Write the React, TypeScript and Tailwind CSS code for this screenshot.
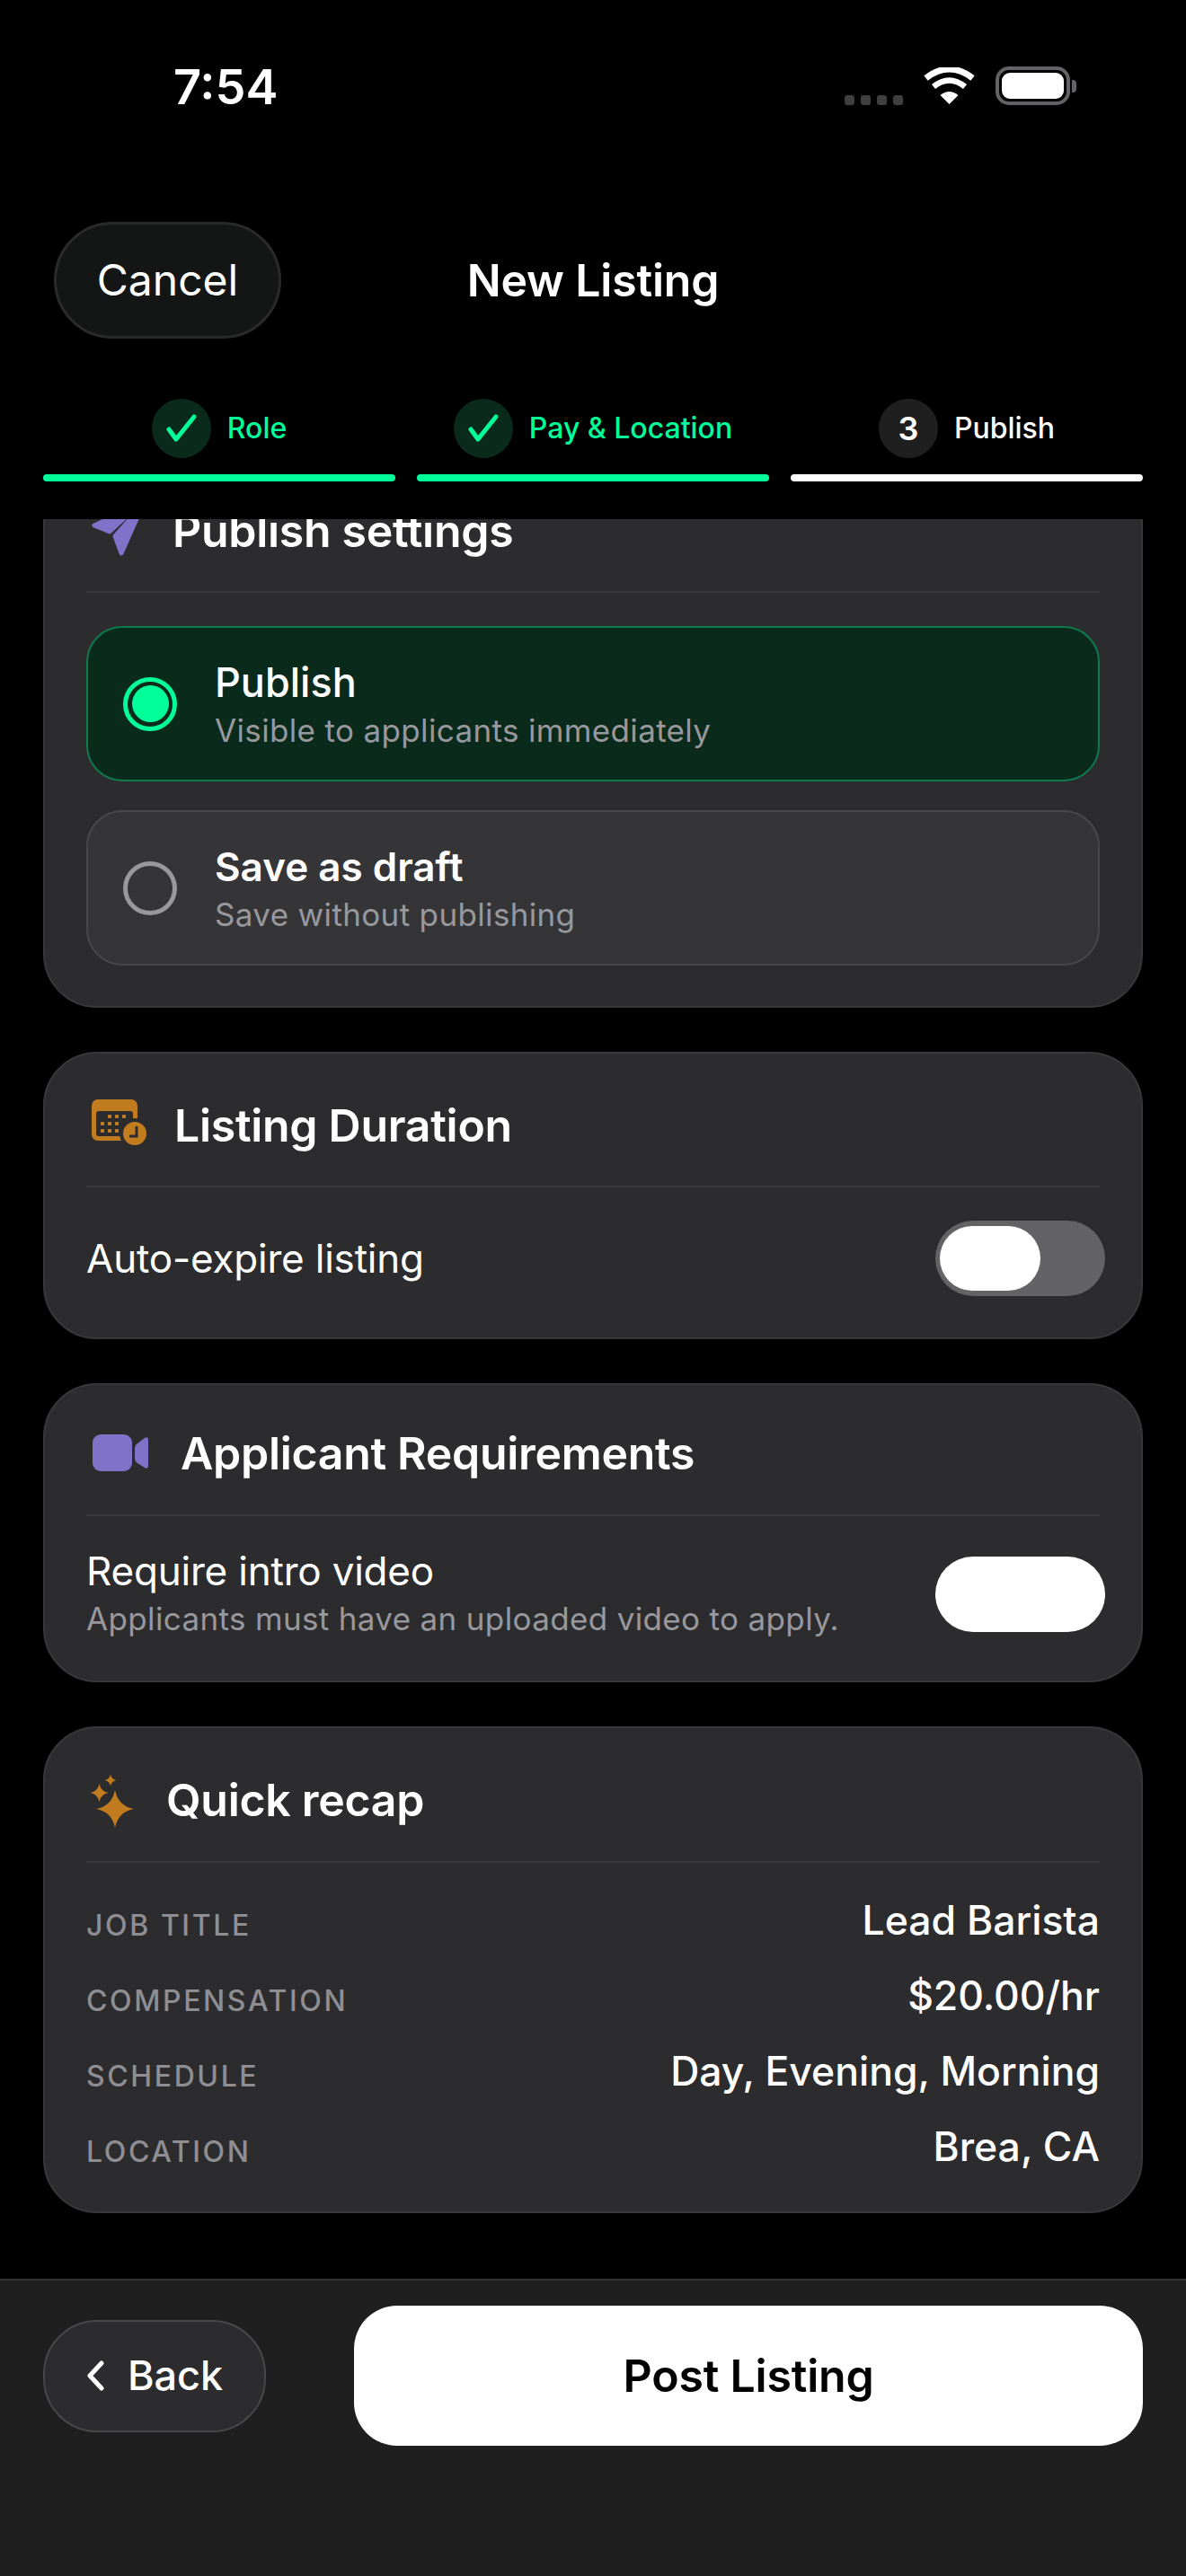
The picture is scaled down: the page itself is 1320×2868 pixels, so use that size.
import React from "react";

function Check() {
  return (
    <svg width="36" height="32" viewBox="0 0 36 32" fill="none">
      <path d="M4 17 L12 28 L32 3" stroke="#00ff99" strokeWidth="5" strokeLinecap="round" strokeLinejoin="round" />
    </svg>
  );
}

function Step({ label, mark, active, gap }: { label: string; mark: React.ReactNode; active: boolean; gap: string }) {
  return (
    <div className="flex-1 flex flex-col">
      <div className={`flex items-center justify-center h-[66px] ${gap}`}>
        <div className={`w-[66px] h-[66px] rounded-full flex items-center justify-center ${active ? "bg-[#0a2a1c]" : "bg-[#1f1f1f]"}`}>{mark}</div>
        <span className={`text-[32px] font-medium ${active ? "text-[#00ff99]" : "text-white"}`}>{label}</span>
      </div>
      <div className={`mt-[18px] h-[8px] rounded-[4px] ${active ? "bg-[#00ff99]" : "bg-white"}`} />
    </div>
  );
}

function Toggle({ on }: { on: boolean }) {
  return on ? (
    <div className="w-[189px] h-[84px] rounded-full bg-white -mr-[6px] shrink-0" />
  ) : (
    <div className="w-[189px] h-[84px] rounded-full bg-[#636366] -mr-[6px] shrink-0 flex items-center pl-[5px]">
      <div className="w-[112px] h-[72px] rounded-full bg-white" />
    </div>
  );
}

function Card({ children }: { children: React.ReactNode }) {
  return <section className="rounded-[60px] bg-[#2c2c2e] border-2 border-[#38383a] px-[46px]">{children}</section>;
}

function CardHead({ icon, title, h }: { icon: React.ReactNode; title: string; h: string }) {
  return (
    <div className={`flex items-center border-b-2 border-[#38383a] ${h}`}>
      {icon}
      <h2 className="text-[50px] font-semibold text-white tracking-[-0.3px]">{title}</h2>
    </div>
  );
}

function Option({ title, sub, selected }: { title: string; sub: string; selected: boolean }) {
  return (
    <div className={`h-[173px] rounded-[40px] border-2 flex items-center pl-[39px] gap-[42px] ${selected ? "bg-[#0a2a1c] border-[#0f7a4e]" : "bg-[#353537] border-[#48484a]"}`}>
      <div className={`w-[60px] h-[60px] rounded-full border-[5px] flex items-center justify-center shrink-0 ${selected ? "border-[#00ff99]" : "border-[#98989d]"}`}>
        {selected && <div className="w-[41px] h-[41px] rounded-full bg-[#00ff99]" />}
      </div>
      <div className="flex flex-col pt-[4px]">
        <span className={`leading-[54px] text-white ${selected ? "text-[45px] font-medium" : "text-[44px] font-semibold"}`}>{title}</span>
        <span className="text-[35px] leading-[52px] tracking-[0.35px] text-[#98989d]">{sub}</span>
      </div>
    </div>
  );
}

function Recap({ label, value }: { label: string; value: string }) {
  return (
    <div className="flex items-center justify-between h-[84px]">
      <span className="text-[32px] font-medium tracking-[2.6px] text-[#8e8e93]">{label}</span>
      <span className="text-[44.5px] font-medium text-white pb-[12px]">{value}</span>
    </div>
  );
}

const PlaneIcon = (
  <svg width="64" height="64" viewBox="0 0 64 64" className="shrink-0 ml-[2px] mr-[30px] -mt-[6px]" fill="#7f72c8" stroke="#7f72c8" strokeWidth="5" strokeLinejoin="round">
    <path d="M7 28 L24 35 L56 5 Z" />
    <path d="M61 5 L30 40 L37 59 Z" />
  </svg>
);

const CalendarIcon = (
  <svg width="64" height="56" viewBox="0 0 64 56" className="shrink-0 ml-[6px] mr-[28px] -mt-[4px]">
    <rect x="0" y="0" width="51" height="46" rx="7" fill="#c27c20" />
    <rect x="5" y="13" width="41" height="28" rx="3" fill="#2c2c2e" />
    {[[18,0],[26,0],[34,0],[10,1],[18,1],[26,1],[10,2],[18,2],[26,2]].map(([x, r], i) => (
      <rect key={i} x={x} y={17 + r * 8} width="4" height="4" rx="1" fill="#c27c20" />
    ))}
    <circle cx="48" cy="38" r="17" fill="#2c2c2e" />
    <circle cx="48" cy="38" r="13" fill="#c27c20" />
    <path d="M50 30 V41 H42" fill="none" stroke="#2c2c2e" strokeWidth="3" />
  </svg>
);

const VideoIcon = (
  <svg width="62" height="42" viewBox="0 0 62 42" className="shrink-0 ml-[7px] mr-[36px]" fill="#7f72c8">
    <rect x="0" y="0" width="44" height="41" rx="9" />
    <path d="M47 15 Q47 12 50 10 L58 4 Q62 2 62 6 V35 Q62 39 58 37 L50 32 Q47 30 47 27 Z" />
  </svg>
);

function star(cx: number, cy: number, r: number, k = 0.16) {
  const q = r * k;
  return `M${cx} ${cy - r} Q${cx + q} ${cy - q} ${cx + r} ${cy} Q${cx + q} ${cy + q} ${cx} ${cy + r} Q${cx - q} ${cy + q} ${cx - r} ${cy} Q${cx - q} ${cy - q} ${cx} ${cy - r} Z`;
}

const SparkIcon = (
  <svg width="50" height="62" viewBox="0 0 50 62" className="shrink-0 ml-[4px] mr-[35px]" fill="#c27c20">
    <path d={star(28, 40, 21)} />
    <path d={star(10.5, 22, 10)} />
    <path d={star(23, 8, 6.5)} />
  </svg>
);

export default function App() {
  return (
    <div className="w-[1320px] h-[2868px] bg-black flex flex-col overflow-hidden" style={{ fontFamily: "Inter, sans-serif" }}>
      {/* status bar */}
      <div className="h-[247px] shrink-0 flex items-start justify-between pl-[193px] pr-[122px] pt-[66px]">
        <span className="text-[54px] leading-[62px] font-semibold text-white">7:54</span>
        <div className="flex items-start mt-[9px]">
          <div className="flex gap-[7px] mt-[31px] mr-[23px]">
            {[0, 1, 2, 3].map((i) => (
              <div key={i} className="w-[11px] h-[11px] rounded-[3px] bg-[#3f3f3f]" />
            ))}
          </div>
          <svg width="57" height="41" viewBox="0 0 57 41" className="mr-[23px]" fill="none" stroke="#fff">
            <path d="M18.5 31 Q28.5 23 38.5 31 L28.5 41 Z" fill="#fff" stroke="none" />
            <path d="M11 21.5 Q28.5 7.5 46 21.5" strokeWidth="6.5" />
            <path d="M2.5 12 Q28.5 -8 54.5 12" strokeWidth="7" />
          </svg>
          <div className="flex items-center -mt-[1px]">
            <div className="w-[83px] h-[43px] rounded-[15px] border-[4px] border-[#636366] p-[3px]">
              <div className="w-full h-full rounded-[9px] bg-white" />
            </div>
            <div className="w-[5px] h-[14px] rounded-r-[4px] bg-[#636366] ml-[2px]" />
          </div>
        </div>
      </div>

      {/* nav */}
      <div className="relative h-[130px] shrink-0 flex items-center justify-center">
        <button className="absolute left-[60px] top-0 w-[253px] h-[130px] rounded-[65px] bg-[#141616] border-[3px] border-[#2a2a2c] text-[48px] text-white">Cancel</button>
        <h1 className="text-[50px] font-semibold text-white tracking-[-0.2px]">New Listing</h1>
      </div>

      {/* stepper */}
      <div className="shrink-0 flex gap-[24px] px-[48px] mt-[67px]">
        <Step label="Role" active gap="gap-[18px]" mark={<Check />} />
        <Step label="Pay & Location" active gap="gap-[18px]" mark={<Check />} />
        <Step label="Publish" active={false} gap="gap-[18px]" mark={<span className="text-[36px] font-semibold text-white">3</span>} />
      </div>

      {/* scroll area */}
      <div className="flex-1 mt-[42px] overflow-hidden">
        <div className="-mt-[69px] px-[48px] flex flex-col gap-[49px]">
          <Card>
            <CardHead icon={PlaneIcon} title="Publish settings" h="h-[149px] pt-[14px]" />
            <div className="pt-[37px] pb-[45px] flex flex-col gap-[32px]">
              <Option title="Publish" sub="Visible to applicants immediately" selected />
              <Option title="Save as draft" sub="Save without publishing" selected={false} />
            </div>
          </Card>

          <Card>
            <CardHead icon={CalendarIcon} title="Listing Duration" h="h-[149px] pt-[14px]" />
            <div className="h-[167px] flex items-center justify-between pb-[10px]">
              <span className="text-[44px] tracking-[-0.2px] text-white">Auto-expire listing</span>
              <Toggle on={false} />
            </div>
          </Card>

          <Card>
            <CardHead icon={VideoIcon} title="Applicant Requirements" h="h-[146px] pt-[8px]" />
            <div className="h-[183px] flex items-center justify-between pb-[10px]">
              <div className="flex flex-col">
                <span className="text-[44px] leading-[54px] tracking-[-0.2px] text-white">Require intro video</span>
                <span className="text-[35px] leading-[52px] tracking-[0.35px] text-[#98989d]">Applicants must have an uploaded video to apply.</span>
              </div>
              <Toggle on />
            </div>
          </Card>

          <Card>
            <CardHead icon={SparkIcon} title="Quick recap" h="h-[150px] pt-[13px]" />
            <div className="pt-[28px] pb-[24px]">
              <Recap label="JOB TITLE" value="Lead Barista" />
              <Recap label="COMPENSATION" value="$20.00/hr" />
              <Recap label="SCHEDULE" value="Day, Evening, Morning" />
              <Recap label="LOCATION" value="Brea, CA" />
            </div>
          </Card>
        </div>
      </div>

      {/* footer */}
      <div className="h-[331px] shrink-0 bg-[#1f1f1f] border-t-2 border-[#333335] px-[48px] pt-[28px]">
        <div className="flex items-center justify-between h-[156px]">
          <button className="w-[248px] h-[125px] rounded-[60px] bg-[#2c2c2e] border-2 border-[#48484a] flex items-center justify-center gap-[26px] text-[45px] font-medium text-white">
            <svg width="20" height="34" viewBox="0 0 20 34" fill="none">
              <path d="M17 3 L4 17 L17 31" stroke="#fff" strokeWidth="5" strokeLinecap="round" strokeLinejoin="round" />
            </svg>
            Back
          </button>
          <button className="w-[878px] h-[156px] rounded-[48px] bg-white text-[50px] font-semibold text-black tracking-[-0.2px]">Post Listing</button>
        </div>
      </div>
    </div>
  );
}
